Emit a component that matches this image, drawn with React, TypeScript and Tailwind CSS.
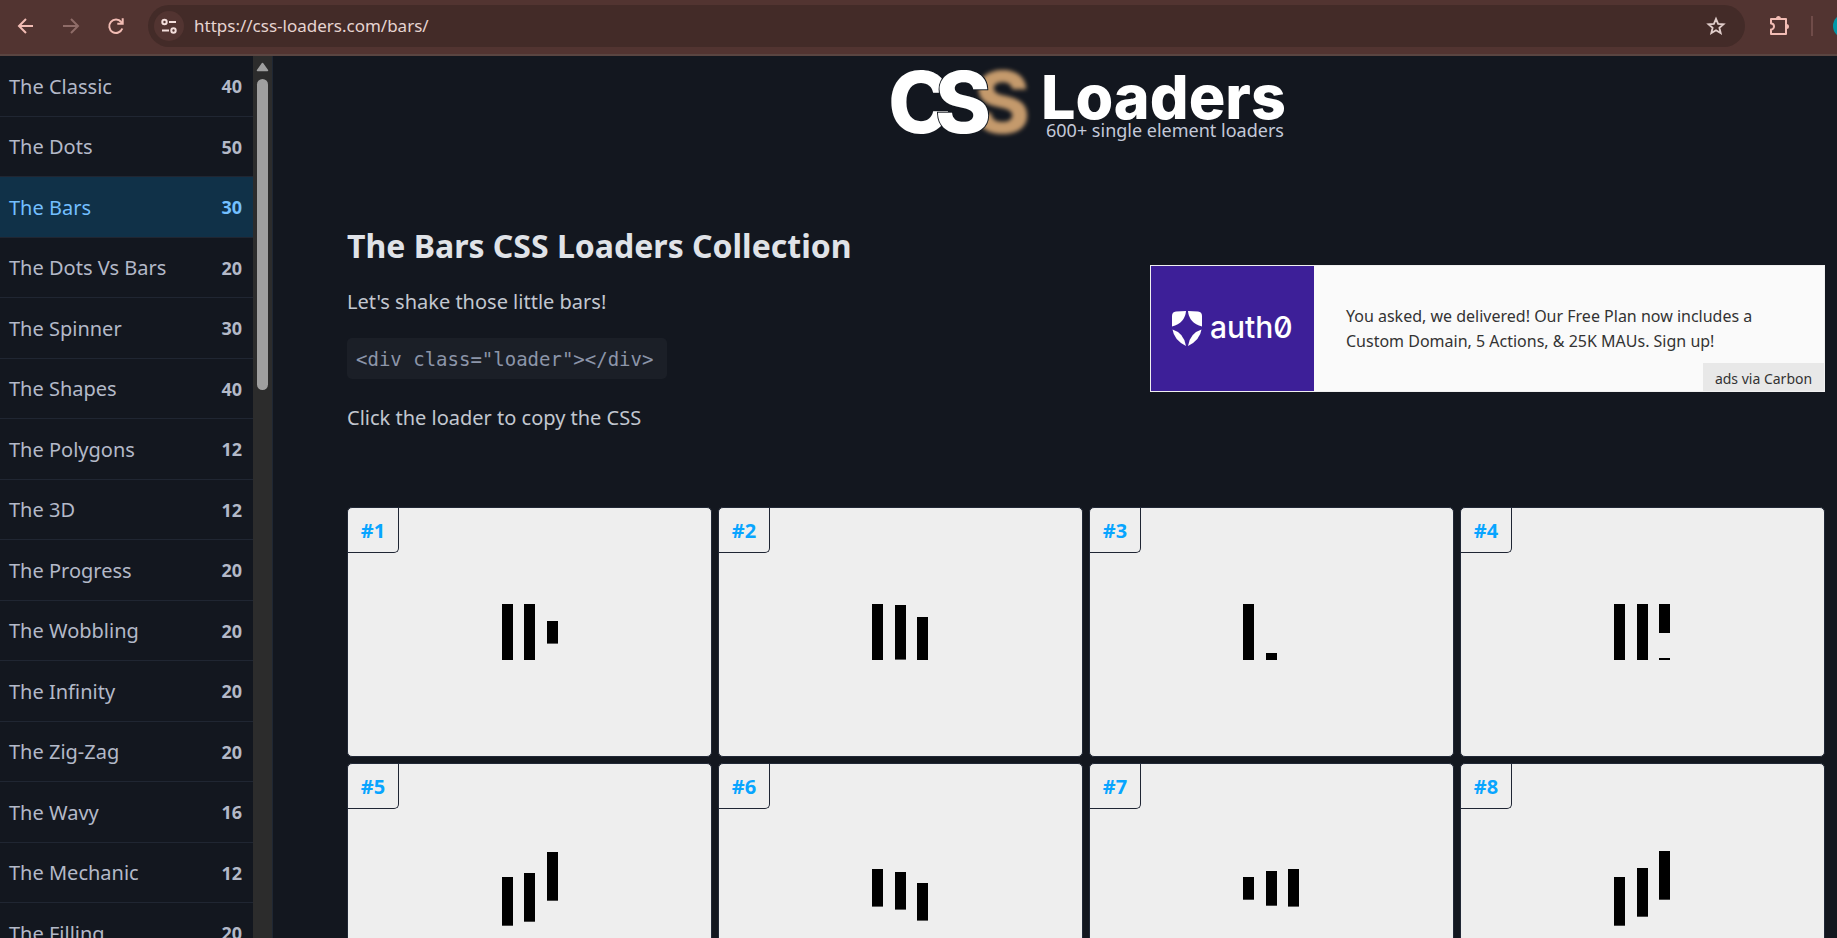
import React from "react";

type Category = { name: string; count: number };
type Bar = { x: number; y: number; h: number };

const categories: Category[] = [
  { name: "The Classic", count: 40 },
  { name: "The Dots", count: 50 },
  { name: "The Bars", count: 30 },
  { name: "The Dots Vs Bars", count: 20 },
  { name: "The Spinner", count: 30 },
  { name: "The Shapes", count: 40 },
  { name: "The Polygons", count: 12 },
  { name: "The 3D", count: 12 },
  { name: "The Progress", count: 20 },
  { name: "The Wobbling", count: 20 },
  { name: "The Infinity", count: 20 },
  { name: "The Zig-Zag", count: 20 },
  { name: "The Wavy", count: 16 },
  { name: "The Mechanic", count: 12 },
  { name: "The Filling", count: 20 },
];

const loaders: Bar[][] = [
  [{ x: 1, y: 20, h: 56 }, { x: 23, y: 20, h: 56 }, { x: 46, y: 37, h: 22.6 }],
  [{ x: 0, y: 20, h: 56 }, { x: 23, y: 21, h: 54.6 }, { x: 45, y: 33, h: 43 }],
  [{ x: 0, y: 20, h: 56 }, { x: 23, y: 69, h: 7 }],
  [{ x: 0, y: 20, h: 56 }, { x: 23, y: 20, h: 56 }, { x: 45, y: 20, h: 29 }, { x: 45, y: 74, h: 2 }],
  [{ x: 1, y: 37, h: 48.7 }, { x: 23, y: 33, h: 48.7 }, { x: 46, y: 12, h: 48.7 }],
  [{ x: 0, y: 29, h: 37.6 }, { x: 23, y: 32, h: 37.6 }, { x: 45, y: 43, h: 37.6 }],
  [{ x: 0, y: 37, h: 22.7 }, { x: 23, y: 31, h: 34.7 }, { x: 45, y: 29, h: 37.6 }],
  [{ x: 0, y: 37, h: 48.7 }, { x: 23, y: 28, h: 48.7 }, { x: 45, y: 11, h: 48.7 }],
];

function BrowserBar() {
  return (
    <header className="flex h-14 shrink-0 items-center overflow-hidden border-b-2 border-[#5a4541] bg-[#523431] pb-0.5 text-[#f2bcb4]">
      <nav className="flex w-[148px] shrink-0 items-center gap-[21px] pl-[14px]" aria-label="Browser">
        <button type="button" aria-label="Back" className="size-6">
          <svg viewBox="0 0 24 24" fill="none" stroke="currentColor" strokeWidth="2">
            <path d="M19 12H5.500M12 5l-7 7 7 7" />
          </svg>
        </button>
        <button type="button" aria-label="Forward" className="size-6 text-[#8f6c68]">
          <svg viewBox="0 0 24 24" fill="none" stroke="currentColor" strokeWidth="2">
            <path d="M4 12h14.500M12 5l7 7-7 7" />
          </svg>
        </button>
        <button type="button" aria-label="Reload" className="size-6">
          <svg viewBox="0 0 24 24" fill="none" stroke="currentColor" strokeWidth="2">
            <path d="M18.300 14.500A6.700 6.700 0 1 1 17.200 8l1.200 1.400" />
            <path d="M18.700 4.300v5.400h-5.400" />
          </svg>
        </button>
      </nav>
      <div className="flex h-[42px] min-w-0 flex-1 items-center rounded-full bg-[#432b28] pl-[6px] pr-[18px]">
        <button type="button" aria-label="Site information" className="flex size-[30px] items-center justify-center rounded-full bg-[#523431] text-[#f3dedb]">
          <svg className="size-[18px]" viewBox="0 0 18 18" fill="none" stroke="currentColor" strokeWidth="2">
            <circle cx="4.500" cy="5" r="2.200" />
            <path d="M9 5h7M2 13.500h7" />
            <circle cx="13.500" cy="13.500" r="2.200" />
          </svg>
        </button>
        <input
          aria-label="Address"
          readOnly
          defaultValue="https://css-loaders.com/bars/"
          className="ml-[10px] min-w-0 flex-1 bg-transparent font-['Noto_Sans',sans-serif] text-[17px] text-[#e6d4d1] outline-none"
        />
        <button type="button" aria-label="Bookmark" className="size-[22px] text-[#e0cdca]">
          <svg viewBox="0 0 24 24" fill="none" stroke="currentColor" strokeWidth="2">
            <path d="M12 4.200l2.300 5.400 5.900.5-4.500 3.900 1.400 5.700L12 16.700l-5.100 3 1.400-5.700-4.500-3.900 5.900-.5z" />
          </svg>
        </button>
      </div>
      <div className="flex shrink-0 items-center pl-[22px]">
        <button type="button" aria-label="Extensions" className="size-6">
          <svg viewBox="0 0 24 24">
            <path d="M4 5h15v15H4v-4.500a3 3 0 0 0 0-6z" fill="none" stroke="currentColor" strokeWidth="2" strokeLinejoin="round" />
            <path d="M9 4.500a2.500 2.500 0 0 1 5 0zM19.500 10a2.500 2.500 0 0 1 0 5z" fill="currentColor" />
          </svg>
        </button>
        <span className="ml-5 h-5 w-0.5 bg-[#704c49]" />
        <span className="ml-5 w-1 overflow-hidden">
          <span className="block size-6 rounded-full bg-[#0097a7]" />
        </span>
      </div>
    </header>
  );
}

function Sidebar() {
  return (
    <aside className="flex w-[273px] shrink-0 overflow-hidden border-r border-[#1f2733]">
      <ul className="min-w-0 flex-1">
        {categories.map((c) => {
          const active = c.name === "The Bars";
          return (
            <li key={c.name} className="border-b border-[#202632] odd:h-[61px] even:h-[60px]">
              <a
                href="#"
                aria-current={active ? "page" : undefined}
                className={
                  active
                    ? "flex h-full items-center justify-between bg-[#103148] pl-[9px] pr-[11px] pt-px text-[#73bfff]"
                    : "flex h-full items-center justify-between pl-[9px] pr-[11px] pt-px text-[#b3b9c8]"
                }
              >
                <span className="text-[20px]">{c.name}</span>
                <span className="text-[18px] font-bold">{c.count}</span>
              </a>
            </li>
          );
        })}
      </ul>
      <div className="flex w-[19px] shrink-0 flex-col items-center bg-[#2c2c2c]" aria-hidden="true">
        <svg className="mt-1.5 h-[10px] w-[13px]" viewBox="0 0 13 10">
          <path d="M6.500 1.500L11.500 8.500H1.500z" fill="#9f9f9f" stroke="#9f9f9f" strokeWidth="1.500" strokeLinejoin="round" />
        </svg>
        <span className="mt-[7px] h-[311px] w-[11px] rounded-full bg-[#9f9f9f]" />
      </div>
    </aside>
  );
}

function Logo() {
  return (
    <a href="#" className="block" aria-label="CSS Loaders home">
      <svg className="h-[94px] w-[400px]" viewBox="0 0 400 94" fontFamily="Inter, sans-serif">
        <defs>
          <filter id="soft" x="-20%" y="-20%" width="140%" height="140%">
            <feGaussianBlur stdDeviation="2" />
          </filter>
        </defs>
        <text x="88" y="77" fontSize="85" fontWeight="800" fill="#c49a6c" filter="url(#soft)">S</text>
        <text x="2" y="77" fontSize="85" fontWeight="800" fill="#fff">C</text>
        <text x="49" y="77" fontSize="85" fontWeight="800" fill="#fff" stroke="#13181f" strokeWidth="2" paintOrder="stroke">S</text>
        <text x="155" y="63" fontSize="61" fontWeight="800" fill="#fff">Loaders</text>
        <text x="160" y="81" fontSize="18" fontFamily="Noto Sans, sans-serif" fill="#c3c9d9">600+ single element loaders</text>
      </svg>
    </a>
  );
}

function Ad() {
  return (
    <div className="relative flex h-[127px] w-[675px] border border-[#f0f0f0] bg-[#fafafa] text-[#333]">
      <a href="#" aria-label="auth0" className="flex w-[163px] shrink-0 items-center justify-center bg-[#3d1f98]">
        <svg className="h-10 w-[124px]" viewBox="0 0 124 40">
          <g fill="#fff">
            <path d="M1 7Q1 3 5 2.600L15 2Q14 14 1 17.500z" />
            <path d="M31 7Q31 3 27 2.600L17 2Q18 14 31 17.500z" />
            <path d="M1.500 20.500Q13 24 15 37Q3 31 1.500 20.500z" />
            <path d="M30.500 20.500Q19 24 17 37Q29 31 30.500 20.500z" />
          </g>
          <text x="39" y="29" fontSize="30" fontWeight="500" fontFamily="Inter, sans-serif" fill="#fff" style={{ fontFeatureSettings: '"zero"' }}>auth0</text>
        </svg>
      </a>
      <a href="#" className="block pl-8 pt-[38px] text-[16px] leading-[25px]">
        You asked, we delivered! Our Free Plan now includes a
        <br />
        Custom Domain, 5 Actions, &amp; 25K MAUs. Sign up!
      </a>
      <a href="#" className="absolute bottom-0 right-0 flex h-7 w-[121px] items-center justify-center bg-[#e8e8e8] pt-0.5 text-[14px]">
        ads via Carbon
      </a>
    </div>
  );
}

function LoaderCard({ index, bars }: { index: number; bars: Bar[] }) {
  return (
    <button
      type="button"
      aria-label={`Copy loader ${index}`}
      className="relative flex h-[250px] items-center justify-center overflow-hidden rounded-[5px] border border-[#212836] bg-[#eee]"
    >
      <span className="absolute left-0 top-0 flex h-[45px] w-[51px] items-center justify-center rounded-br-[5px] border-b border-r border-[#1f2533] pt-0.5 text-[20px] font-bold text-[#08a5ff]">
        #{index}
      </span>
      <svg className="h-24 w-[57px]" viewBox="0 0 57 96">
        {bars.map((b, i) => (
          <rect key={i} x={b.x} y={b.y} width="11" height={b.h} fill="#000" />
        ))}
      </svg>
    </button>
  );
}

export default function App() {
  return (
    <div className="flex h-screen flex-col overflow-hidden bg-[#13171f] font-['Noto_Sans',sans-serif]">
      <BrowserBar />
      <div className="flex min-h-0 flex-1">
        <Sidebar />
        <main className="min-w-0 flex-1 overflow-hidden pl-[74px] pr-3">
          <div className="flex justify-center">
            <Logo />
          </div>
          <section className="flex justify-between pt-[72px]">
            <div className="text-[20px] text-[#c2c7d0]">
              <h1 className="text-[32px] font-bold leading-12 text-[#e0e3e8]">The Bars CSS Loaders Collection</h1>
              <p className="mt-[17px] leading-[30px]">Let&apos;s shake those little bars!</p>
              <code className="mt-[21px] flex h-[41px] w-fit items-center rounded-[5px] bg-[#1b1f27] pl-[9px] pr-[14px] pt-0.5 font-['DejaVu_Sans_Mono',monospace] text-[19px] text-[#8c95a9]">
                {'<div class="loader"></div>'}
              </code>
              <p className="mt-6 leading-[30px]">Click the loader to copy the CSS</p>
            </div>
            <div className="pt-[43px]">
              <Ad />
            </div>
          </section>
          <section className="mt-[74px] grid grid-cols-4 gap-1.5" aria-label="Loaders">
            {loaders.map((bars, i) => (
              <LoaderCard key={i} index={i + 1} bars={bars} />
            ))}
          </section>
        </main>
      </div>
    </div>
  );
}
